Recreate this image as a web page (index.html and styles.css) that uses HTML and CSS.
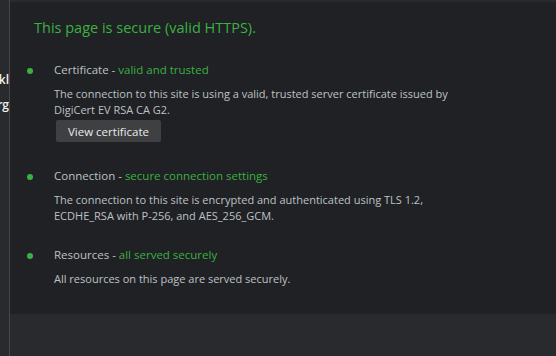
FILE: index.html
```html
<!DOCTYPE html>
<html>
<head>
<meta charset="utf-8">
<link rel="stylesheet" href="styles.css">
</head>
<body>
<div class="app">
  <aside class="side">
    <div class="side-item side-a">Settingkl</div>
    <div class="side-item side-b">Overviewarg</div>
  </aside>
  <main class="main">
    <section class="panel">
      <h1 class="title">This page is secure (valid HTTPS).</h1>
      <div class="item">
        <span class="dot"></span>
        <div class="item-body">
          <div class="head">Certificate - <span class="ok">valid and trusted</span></div>
          <p class="desc">The connection to this site is using a valid, trusted server certificate issued by DigiCert EV RSA CA G2.</p>
          <button class="btn">View certificate</button>
        </div>
      </div>
      <div class="item">
        <span class="dot"></span>
        <div class="item-body">
          <div class="head">Connection - <span class="ok">secure connection settings</span></div>
          <p class="desc">The connection to this site is encrypted and authenticated using TLS 1.2, ECDHE_RSA with P-256, and AES_256_GCM.</p>
        </div>
      </div>
      <div class="item">
        <span class="dot"></span>
        <div class="item-body">
          <div class="head">Resources - <span class="ok">all served securely</span></div>
          <p class="desc">All resources on this page are served securely.</p>
        </div>
      </div>
    </section>
    <div class="lower"></div>
  </main>
</div>
</body>
</html>
```
FILE: styles.css
```css
html, body {
  margin: 0;
  height: 100%;
  background: #292a2d;
  font-family: "Open Sans", "Noto Sans", sans-serif;
}
.app {
  display: flex;
  height: 356px;
  overflow: hidden;
}
.side {
  width: 9px;
  flex: none;
  border-right: 1px solid #45474a;
  overflow: hidden;
  padding-top: 72px;
  display: flex;
  flex-direction: column;
  gap: 10px;
}
.side-item {
  display: flex;
  justify-content: flex-end;
  white-space: nowrap;
  color: #f1f1f1;
  font-size: 12px;
  font-weight: 600;
  line-height: 15px;
}
.main {
  flex: 1;
  display: flex;
  flex-direction: column;
  padding-top: 2px;
}
.panel {
  background: #202124;
  height: 312px;
  padding: 16px 0 0 24px;
  box-sizing: border-box;
}
.title {
  margin: 0 0 24px 0;
  font-size: 14.5px;
  font-weight: 400;
  color: #3cb043;
  line-height: 20px;
}
.item {
  display: flex;
  align-items: flex-start;
  margin-bottom: 23px;
}
.dot {
  width: 6px;
  height: 6px;
  border-radius: 50%;
  background: #3cb043;
  margin: 6px 0 0 -7px;
  flex: none;
}
.item-body {
  margin-left: 21px;
}
.head {
  font-size: 11.5px;
  color: #bdc1c6;
  line-height: 16px;
  margin-bottom: 8px;
}
.ok { color: #3cb043; }
.desc {
  margin: 0;
  font-size: 11px;
  line-height: 16px;
  color: #bdc1c6;
  width: 400px;
}
.btn {
  display: block;
  margin: 2px 0 3px 2px;
  background: #3f4042;
  color: #e8eaed;
  border: none;
  border-radius: 2px;
  font-family: inherit;
  font-size: 11.5px;
  padding: 3px 12px;
  height: 22px;
}
.lower {
  flex: 1;
  background: #292a2d;
}
```
